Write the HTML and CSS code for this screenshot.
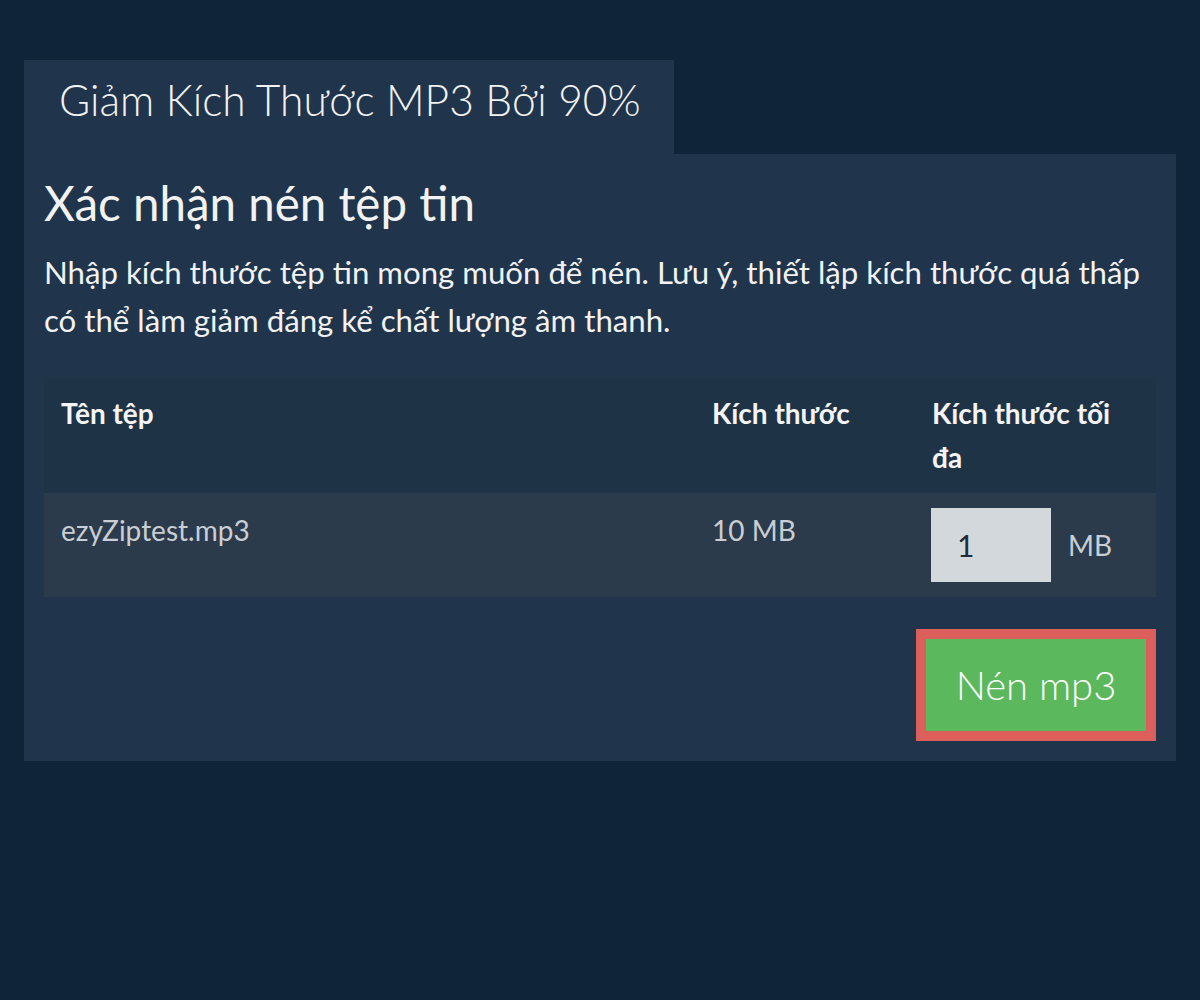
FILE: index.html
```html
<!DOCTYPE html>
<html lang="vi">
<head>
<meta charset="utf-8">
<title>Giảm Kích Thước MP3</title>
<link rel="stylesheet" href="styles.css">
</head>
<body>
<div class="wrap">
  <div class="tab">Giảm Kích Thước MP3 Bởi 90%</div>
  <div class="panel">
    <h1 class="heading">Xác nhận nén tệp tin</h1>
    <p class="desc">Nhập kích thước tệp tin mong muốn để nén. Lưu ý, thiết lập kích thước quá thấp có thể làm giảm đáng kể chất lượng âm thanh.</p>
    <table class="files">
      <thead>
        <tr>
          <th class="c-name">Tên tệp</th>
          <th class="c-size">Kích thước</th>
          <th class="c-max">Kích thước tối đa</th>
        </tr>
      </thead>
      <tbody>
        <tr>
          <td class="c-name">ezyZiptest.mp3</td>
          <td class="c-size">10 MB</td>
          <td class="c-max"><div class="maxbox"><input class="num" type="text" value="1"><span class="unit">MB</span></div></td>
        </tr>
      </tbody>
    </table>
    <div class="actions">
      <button class="go">Nén mp3</button>
    </div>
  </div>
</div>
</body>
</html>
```

FILE: styles.css
```css
* { box-sizing: border-box; }
html, body {
  margin: 0;
  padding: 0;
  background: #0f2439;
  font-family: Lato, "Open Sans", sans-serif;
}
.wrap {
  padding: 60px 24px 0 24px;
}
.tab {
  display: inline-block;
  vertical-align: top;
  background: #20354c;
  color: #f2f2f2;
  font-weight: 300;
  font-size: 42.5px;
  height: 94px;
  line-height: 80px;
  padding: 0 20px 0 35px;
  width: 650px;
  white-space: nowrap;
}
.panel {
  background: #20354c;
  padding: 20px 20px 20px 20px;
}
.heading {
  margin: 1px 0 0 0;
  font-size: 47.5px;
  font-weight: 400;
  line-height: 56px;
  color: #f2f2f2;
}
.desc {
  margin: 17px 0 0 0;
  font-size: 31.2px;
  line-height: 48px;
  color: #f2f2f2;
}
.files {
  margin-top: 33px;
  width: 100%;
  border-collapse: collapse;
  border-spacing: 0;
}
.files th {
  background: #1f3347;
  color: #f4f4f4;
  font-weight: 700;
  font-size: 28px;
  line-height: 44px;
  text-align: left;
  vertical-align: top;
  padding: 14px 17px 14px 17px;
}
.files td {
  background: #2b3b4b;
  color: #c9ced4;
  font-size: 28px;
  line-height: 44px;
  vertical-align: top;
  padding: 15px 17px;
}
.c-name { width: 651px; }
.c-size { width: 220px; }
.files td.c-max { padding-left: 16px; }
.maxbox {
  display: flex;
  align-items: center;
  gap: 17px;
}
.num {
  width: 120px;
  height: 74px;
  border: none;
  background: #d3d8dc;
  color: #222c38;
  font-family: Lato, sans-serif;
  font-size: 30px;
  padding: 0 26px;
  outline: none;
}
.unit {
  color: #c9ced4;
  font-size: 28px;
}
.actions {
  display: flex;
  justify-content: flex-end;
  margin-top: 32px;
}
.go {
  width: 240px;
  height: 112px;
  border: 10px solid #dc5f5b;
  background: #5cb85c;
  color: #ffffff;
  font-family: Lato, sans-serif;
  font-weight: 300;
  font-size: 40px;
  padding: 0;
}
```
